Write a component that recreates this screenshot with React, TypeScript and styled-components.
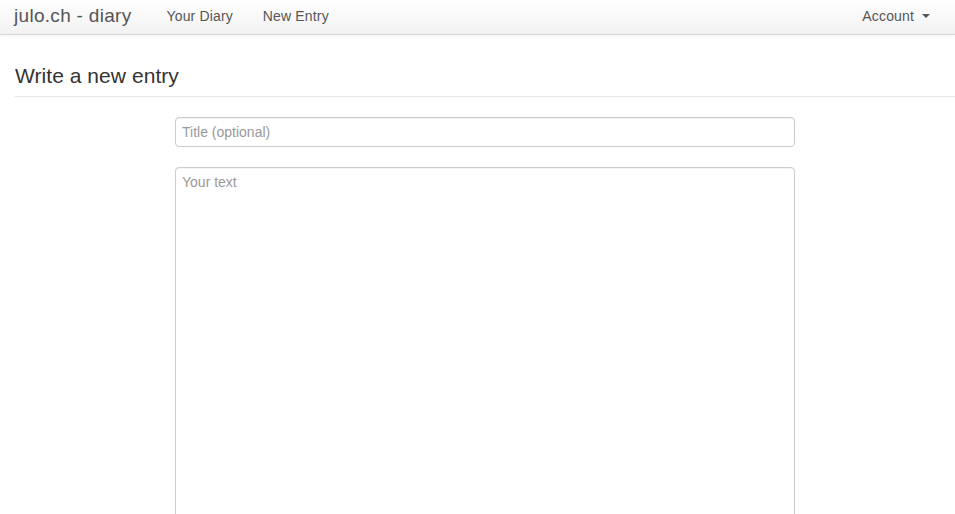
import React from "react";
import styled, { createGlobalStyle } from "styled-components";

const Global = createGlobalStyle`
  html, body { margin: 0; padding: 0; background: #fff; }
  body { font-family: "Liberation Sans", Arial, Helvetica, sans-serif; color: #333; font-size: 14px; overflow: hidden; }
  * { box-sizing: border-box; }
`;

const Navbar = styled.nav`
  height: 35px;
  display: flex;
  align-items: center;
  background-image: linear-gradient(to bottom, #ffffff 0%, #f2f2f2 100%);
  border-bottom: 1px solid #d8d8d8;
  box-shadow: 0 1px 4px rgba(0, 0, 0, 0.06);
  padding: 0 0 0 14px;
`;

const Brand = styled.a`
  font-size: 19px;
  letter-spacing: 0.3px;
  color: #555;
  text-decoration: none;
  margin-right: 35px;
  margin-top: -2px;
`;

const NavLink = styled.a`
  font-size: 14px;
  letter-spacing: 0.15px;
  color: #555;
  text-decoration: none;
  margin-right: 30px;
  margin-top: -3px;
`;

const Spacer = styled.div`
  flex: 1;
`;

const Dropdown = styled(NavLink)`
  display: flex;
  align-items: center;
  margin-right: 25px;
`;

const Caret = styled.span`
  display: inline-block;
  width: 0;
  height: 0;
  margin-left: 8px;
  border-top: 4px solid #555;
  border-left: 4px solid transparent;
  border-right: 4px solid transparent;
`;

const Header = styled.div`
  margin: 29px 0 0 15px;
  padding-bottom: 8px;
  border-bottom: 1px solid #e5e5e5;
`;

const Heading = styled.h3`
  margin: 0;
  font-size: 21px;
  letter-spacing: 0.05px;
  font-weight: 400;
  line-height: 24px;
  color: #333;
`;

const Form = styled.form`
  margin: 20px 0 0 175px;
  width: 620px;
  display: flex;
  flex-direction: column;
  gap: 20px;
`;

const fieldBase = `
  width: 100%;
  border: 1px solid #cccccc;
  border-radius: 4px;
  font-family: "Liberation Sans", Arial, Helvetica, sans-serif;
  font-size: 14px;
  color: #555;
  padding: 6px 6px;
  box-shadow: inset 0 1px 1px rgba(0, 0, 0, 0.05);
  outline: none;
  &::placeholder { color: #999; }
`;

const Input = styled.input`
  ${fieldBase}
  height: 30px;
`;

const TextArea = styled.textarea`
  ${fieldBase}
  height: 400px;
  resize: none;
  padding-top: 6px;
`;

export default function App() {
  return (
    <>
      <Global />
      <Navbar>
        <Brand href="#">julo.ch - diary</Brand>
        <NavLink href="#">Your Diary</NavLink>
        <NavLink href="#">New Entry</NavLink>
        <Spacer />
        <Dropdown href="#">
          Account<Caret />
        </Dropdown>
      </Navbar>
      <Header>
        <Heading>Write a new entry</Heading>
      </Header>
      <Form>
        <Input placeholder="Title (optional)" />
        <TextArea placeholder="Your text" />
      </Form>
    </>
  );
}
